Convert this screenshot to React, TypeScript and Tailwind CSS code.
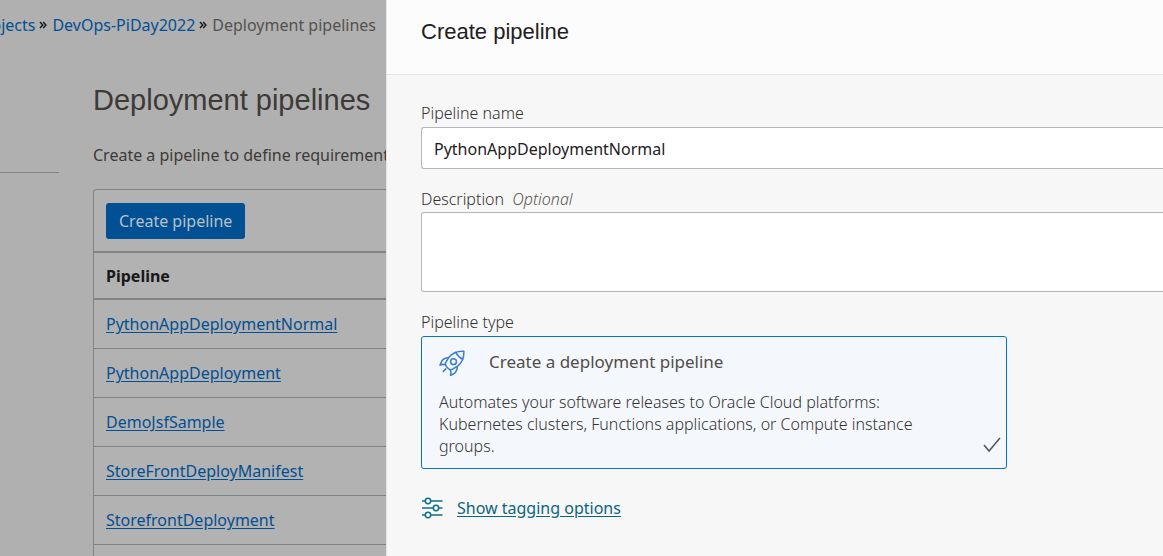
import React from "react";

const pipelines = [
  "PythonAppDeploymentNormal",
  "PythonAppDeployment",
  "DemoJsfSample",
  "StoreFrontDeployManifest",
  "StorefrontDeployment",
];

function Separator() {
  return (
    <svg aria-hidden="true" viewBox="0 0 8 8" className="size-2 shrink-0" fill="none" stroke="#1c1c1c" strokeWidth="1.5">
      <path d="M1 1l2.700 3L1 7M4.200 1l2.700 3-2.700 3" />
    </svg>
  );
}

function RocketIcon() {
  return (
    <svg aria-hidden="true" viewBox="0 0 26 26" className="mt-[2px] size-[26px] shrink-0" fill="none" stroke="#3b7dd0" strokeWidth="1.5" strokeLinejoin="round" strokeLinecap="round">
      <path d="M24.800 1.200C18.500 .9 13.500 2.800 10 7.200L6.700 12.600C6 14.200 6.600 15.400 7.400 16.500L9.600 18.700C10.800 19.800 12 20 13.600 19.200L19 15.800C23.300 12 25.200 7.300 24.800 1.200Z" />
      <path d="M16.800 2.300C18.300 5.300 20.600 7.700 23.700 9.200" />
      <circle cx="14.500" cy="11.700" r="2.900" />
      <path d="M9.600 7.800C5.200 7.600 2.200 10.500 1 15.200C3 14.200 4.800 14.100 6.500 14.900" />
      <path d="M18.300 16.400C18.400 20.700 15.800 23.900 11.500 25.200C12 23.200 12 21.200 11.300 19.700" />
      <path d="M6.800 18.900L4.300 21.400" />
    </svg>
  );
}

function SlidersIcon() {
  return (
    <svg aria-hidden="true" viewBox="0 0 22 22" className="size-[22px] shrink-0" fill="none" stroke="#13708a" strokeWidth="1.5">
      <path d="M1 4h3M10 4h11.500M1 11h11M18 11h3.500M1 18h3M10 18h11.500" />
      <circle cx="7" cy="4" r="2.700" />
      <circle cx="15" cy="11" r="2.700" />
      <circle cx="7" cy="18" r="2.700" />
    </svg>
  );
}

function PipelineList() {
  return (
    <div className="flex w-[386px] shrink-0 flex-col overflow-hidden bg-[#b0b0b0] text-[#3d3a37]">
      <nav aria-label="Breadcrumb" className="mt-3 flex h-[26px] w-[376px] items-center justify-end gap-1 whitespace-nowrap">
        <a href="#projects" className="text-[#034f93]">Projects</a>
        <Separator />
        <a href="#project" className="ml-px text-[#034f93]">DevOps-PiDay2022</a>
        <Separator />
        <span className="ml-px text-[#555250]">Deployment pipelines</span>
      </nav>
      <div className="flex flex-1">
        <div className="h-[135px] w-[59px] shrink-0 border-b border-[#7e8487]" />
        <main className="ml-[34px] flex min-w-0 flex-1 flex-col whitespace-nowrap">
          <h1 className="mt-11 font-['Liberation_Sans',sans-serif] text-[29px] leading-9">Deployment pipelines</h1>
          <p className="mt-[25px] leading-6">Create a pipeline to define requirements</p>
          <div className="mt-[22px] flex-1 rounded-tl border-t border-l border-[#7e8487] bg-[#b2b2b2]">
            <div className="flex h-[61px] items-center px-3">
              <button type="button" className="h-9 rounded-[3px] bg-[#015093] px-[13px] text-[#b9c0c7]">Create pipeline</button>
            </div>
            <table className="w-full text-left">
              <thead>
                <tr className="h-[47px] border-y-2 border-[#7e8487]">
                  <th scope="col" className="px-3 font-bold text-[#181818]">Pipeline</th>
                </tr>
              </thead>
              <tbody>
                {pipelines.map((name) => (
                  <tr key={name} className="h-[49px] border-b border-[#7e8487]">
                    <td className="px-3">
                      <a href={"#" + name} className="text-[#034f93] underline underline-offset-2">{name}</a>
                    </td>
                  </tr>
                ))}
              </tbody>
            </table>
          </div>
        </main>
      </div>
    </div>
  );
}

function CreatePipelinePanel() {
  return (
    <section aria-labelledby="panel-title" className="flex min-w-0 flex-1 flex-col border-l border-[#e4e4e4] bg-[#f7f7f7] text-[#514d49]">
      <header className="h-[75px] border-b border-[#e4e4e4] bg-[#fcfcfc] pt-[18px] pl-[34px]">
        <h2 id="panel-title" className="font-['Liberation_Sans',sans-serif] text-[22px] leading-7 text-[#22201e]">Create pipeline</h2>
      </header>
      <form className="flex flex-col pt-[26px] pl-[34px]">
        <label htmlFor="name" className="leading-6 font-light text-[#35322f]">Pipeline name</label>
        <input id="name" defaultValue="PythonAppDeploymentNormal" className="mt-[2px] h-[42px] w-full rounded-l-[3px] border border-r-0 border-[#b3b8be] bg-white px-3 pt-px text-[#22201e]" />
        <label htmlFor="description" className="mt-[18px] leading-6 font-light text-[#35322f]">
          Description <em className="ml-1 text-[#5c5855]">Optional</em>
        </label>
        <textarea id="description" className="mt-px h-20 w-full resize-none rounded-l-[3px] border border-r-0 border-[#b3b8be] bg-white px-3 py-2" />
        <fieldset className="mt-[18px]">
          <legend className="leading-6 font-light text-[#35322f]">Pipeline type</legend>
          <label className="mt-[2px] flex w-full max-w-[586px] flex-col rounded-[3px] border border-[#0572ce] bg-[#f4f8fd] px-[17px] pt-[11px] pb-[11px]">
            <input type="radio" name="type" defaultChecked className="sr-only" />
            <span className="flex items-center gap-6">
              <RocketIcon />
              <span className="text-[17px] leading-7">Create a deployment pipeline</span>
            </span>
            <span className="mt-[15px] flex items-end justify-between">
              <span className="max-w-[500px] leading-[22px] font-light text-[#35322f]">
                Automates your software releases to Oracle Cloud platforms: Kubernetes clusters, Functions applications, or Compute instance groups.
              </span>
              <svg aria-hidden="true" viewBox="0 0 18 18" className="-mr-3 mb-[3px] size-[18px] shrink-0" fill="none" stroke="#555" strokeWidth="1.500">
                <path d="M1 9l5 6L17 2" />
              </svg>
            </span>
          </label>
        </fieldset>
        <div className="mt-[27px] flex items-center gap-[14px]">
          <SlidersIcon />
          <a href="#tagging" className="leading-6 text-[#0b6580] underline underline-offset-2">Show tagging options</a>
        </div>
      </form>
    </section>
  );
}

export default function App() {
  return (
    <div className="flex h-screen overflow-hidden font-['Noto_Sans',sans-serif] text-[16px]">
      <PipelineList />
      <CreatePipelinePanel />
    </div>
  );
}
